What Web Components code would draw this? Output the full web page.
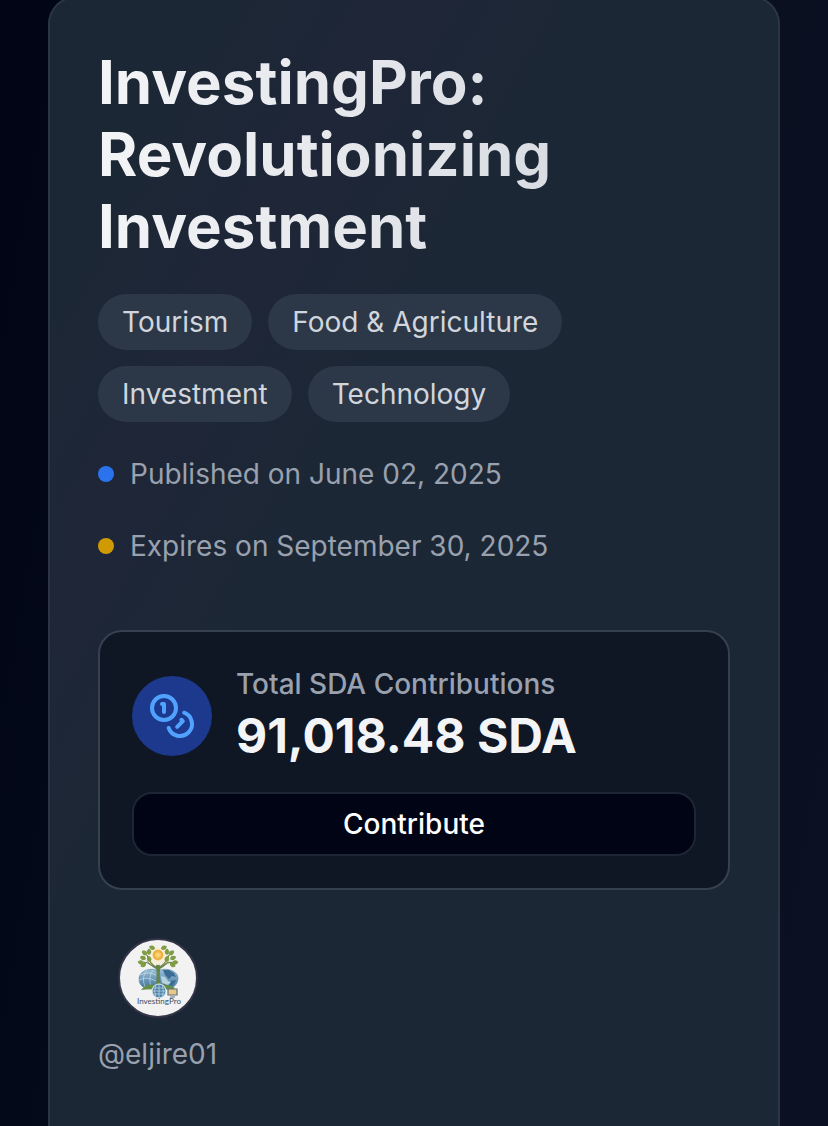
<!DOCTYPE html>
<html lang="en">
<head>
<meta charset="utf-8">
<meta name="viewport" content="width=device-width, initial-scale=1">
<title>InvestingPro: Revolutionizing Investment</title>
<style>
  body {
    margin: 0;
    font-family: Inter, "Liberation Sans", sans-serif;
    font-size: 28px;
    line-height: 40px;
    color: #99a1af;
    background: #020617;
  }
</style>
</head>
<body>
<project-page>
  <project-card>
    <gradient-title slot="title">InvestingPro: Revolutionizing Investment</gradient-title>
    <tag-chip slot="tags">Tourism</tag-chip>
    <tag-chip slot="tags">Food &amp; Agriculture</tag-chip>
    <tag-chip slot="tags">Investment</tag-chip>
    <tag-chip slot="tags">Technology</tag-chip>
    <date-line slot="dates" style="--dot: #2b73ec">Published on June 02, 2025</date-line>
    <date-line slot="dates" style="--dot: #d09a04">Expires on September 30, 2025</date-line>
    <contribution-box>
      <span slot="label">Total SDA Contributions</span>
      <span slot="amount">91,018.48 SDA</span>
      <span slot="action">Contribute</span>
    </contribution-box>
    <author-badge>@eljire01</author-badge>
  </project-card>
</project-page>

<script>
const define = (name, html) => {
  const template = document.createElement('template');
  template.innerHTML = html;
  customElements.define(name, class extends HTMLElement {
    constructor() {
      super();
      this.attachShadow({ mode: 'open' }).append(template.content.cloneNode(true));
    }
  });
};

define('project-page', `
  <style>
    :host {
      display: flex; flex-direction: column; box-sizing: border-box;
      min-height: 100vh; padding: 0 48px;
      background: linear-gradient(100deg, #010516 0%, #050b1b 30%, #0a1020 75%, #0b1022 100%);
    }
  </style>
  <slot></slot>`);

define('project-card', `
  <style>
    :host {
      display: flex; flex-direction: column; flex: 1; box-sizing: border-box;
      margin-top: -4px; padding: 48px;
      border: 2px solid #2b3644; border-bottom: 0; border-radius: 28px 28px 0 0;
      background: linear-gradient(120deg, #1c2735 0%, #1c2735 12%, #1e2637 26%, #1c2735 40%, #1c2735 100%);
    }
    .tags { display: flex; flex-wrap: wrap; gap: 16px; margin-top: 32px; }
    .dates { display: flex; flex-direction: column; gap: 32px; margin: 32px 0 64px; }
  </style>
  <slot name="title"></slot>
  <div class="tags"><slot name="tags"></slot></div>
  <div class="dates"><slot name="dates"></slot></div>
  <slot></slot>`);

define('gradient-title', `
  <style>
    :host { display: block; }
    h1 {
      margin: 0; max-width: 600px;
      font-size: 60px; line-height: 72px; font-weight: 700;
      color: transparent;
      background: linear-gradient(to right, #f3f4f6, #d1d5dc);
      -webkit-background-clip: text; background-clip: text;
    }
  </style>
  <h1><slot></slot></h1>`);

define('tag-chip', `
  <style>
    :host {
      display: block; padding: 8px 24px; border-radius: 28px;
      background: #2c3747; color: #d1d5dc;
    }
  </style>
  <slot></slot>`);

define('date-line', `
  <style>
    :host { display: flex; align-items: center; gap: 16px; }
    i { width: 16px; height: 16px; border-radius: 50%; background: var(--dot); }
  </style>
  <i></i><span><slot></slot></span>`);

define('contribution-box', `
  <style>
    :host {
      display: flex; flex-direction: column; gap: 24px; padding: 32px;
      border: 2px solid #364150; border-radius: 24px; background: #0f1624;
    }
    .row { display: flex; align-items: center; gap: 24px; }
    .icon {
      display: grid; place-items: center; width: 80px; height: 80px;
      border-radius: 50%; background: #1c398e; color: #51a2ff;
    }
    .label { font-weight: 500; }
    .amount { font-size: 48px; line-height: 64px; font-weight: 700; color: #f3f4f6; }
    button {
      height: 64px; padding: 0 32px; border: 2px solid #1e2533; border-radius: 20px;
      background: #000414; color: #fff; font: inherit; font-weight: 500; cursor: pointer;
    }
  </style>
  <div class="row">
    <div class="icon">
      <svg width="48" height="48" viewBox="0 0 24 24" fill="none" stroke="currentColor" stroke-width="2" stroke-linecap="round" stroke-linejoin="round" aria-hidden="true">
        <circle cx="8" cy="8" r="6"/>
        <path d="M18.09 10.37A6 6 0 1 1 10.34 18"/>
        <path d="M7 6h1v4"/>
        <path d="m16.71 13.88.7.71-2.82 2.82"/>
      </svg>
    </div>
    <div>
      <div class="label"><slot name="label"></slot></div>
      <div class="amount"><slot name="amount"></slot></div>
    </div>
  </div>
  <button type="button"><slot name="action"></slot></button>`);

define('author-badge', `
  <style>
    :host {
      display: flex; flex-direction: column; align-items: center; gap: 16px;
      align-self: flex-start; margin-top: 48px;
    }
    svg { display: block; }
  </style>
  <svg width="80" height="80" viewBox="0 0 80 80" role="img" aria-label="InvestingPro logo">
    <defs>
      <radialGradient id="sun"><stop offset="0" stop-color="#ffe28a"/><stop offset="1" stop-color="#eda52e"/></radialGradient>
      <linearGradient id="sea" x2="0" y2="1"><stop offset="0" stop-color="#9cc1d8"/><stop offset="1" stop-color="#3c7199"/></linearGradient>
      <path id="leaf" d="M0 0C-3-1.500-3-4.500 0-6.500C3-4.500 3-1.500 0 0Z"/>
    </defs>
    <circle cx="40" cy="40" r="39" fill="#f2f2f3" stroke="#343548" stroke-width="2"/>
    <path d="M40 33C34 29 21 32 21 41C21 48 27 51 33 51H49C55 50 60 47 60 40C60 32 46 29 40 33Z" fill="url(#sea)" stroke="#5485a8" stroke-width=".6"/>
    <g fill="none" stroke="#d3e4ed" stroke-width=".6">
      <path d="M22 37Q30 33 38 37M21 42Q29 38 38 43M29 32Q23 39 27 49M35 32Q30 39 33 49"/>
    </g>
    <path d="M45 32l6 0 5 3 2 4-4-1-3 3-4-4ZM53 43l5-1-3 5-4 1Z" fill="#386c94"/>
    <path d="M43 38l4 1 3 4 3 1-3 3-6-2Z" fill="#b7d2df"/>
    <path d="M23 52Q29 45 37 47L44 47Q51 46 57 50L55 52Q39 50 23 52Z" fill="#629044"/>
    <path d="M37 50Q40 38 38 31Q32 28 28 22Q34 28 38 28L40 23L42 28Q47 27 52 21Q48 28 42 31Q41 40 43 50Z" fill="#66834a"/>
    <circle cx="40" cy="18" r="9" fill="#f7efd8"/>
    <path d="M29 17Q32 26 38 29M51 17Q48 25 42 29M23 25Q29 23 33 27M57 25Q50 23 47 27" fill="none" stroke="#76884a" stroke-width="1.200"/>
    <circle cx="40" cy="17" r="5" fill="url(#sun)" stroke="#e8a536" stroke-width=".6"/>
    <g fill="#809d45">
      <use href="#leaf" transform="translate(37 11) rotate(-65)"/>
      <use href="#leaf" transform="translate(43 11) rotate(65)"/>
      <use href="#leaf" transform="translate(31 17) rotate(0)"/>
      <use href="#leaf" transform="translate(49 17) rotate(0)"/>
      <use href="#leaf" transform="translate(29 17) rotate(-50)"/>
      <use href="#leaf" transform="translate(51 17) rotate(50)"/>
      <use href="#leaf" transform="translate(28 21) rotate(-70)"/>
      <use href="#leaf" transform="translate(52 21) rotate(70)"/>
      <use href="#leaf" transform="translate(26 25) rotate(-80)"/>
      <use href="#leaf" transform="translate(54 25) rotate(80)"/>
      <use href="#leaf" transform="translate(28 25) rotate(-125)"/>
      <use href="#leaf" transform="translate(52 25) rotate(125)"/>
      <use href="#leaf" transform="translate(32 24) rotate(-15)"/>
      <use href="#leaf" transform="translate(48 24) rotate(15)"/>
    </g>
    <circle cx="41" cy="53" r="7" fill="#4b81aa" stroke="#e8eff2" stroke-width="1"/>
    <path d="M34 53h14M35 50h12M35 56h12M41 46v14M38 47q-3 6 0 12M44 47q3 6 0 12" fill="none" stroke="#c4dbe7" stroke-width=".7"/>
    <path d="M50 51h9v6h-9ZM52 59h5" fill="#e8c98c" stroke="#60717b" stroke-width="1.200"/>
    <text x="41" y="66" text-anchor="middle" font-family="Lato, sans-serif" font-size="8" font-weight="500" fill="#4b5969">InvestingPro</text>
  </svg>
  <span><slot></slot></span>`);
</script>
</body>
</html>
